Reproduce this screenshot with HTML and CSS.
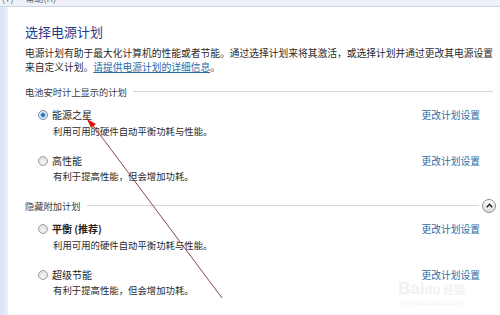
FILE: index.html
```html
<!DOCTYPE html>
<html lang="zh">
<head>
<meta charset="utf-8">
<link rel="stylesheet" href="styles.css">
</head>
<body>
<div class="menubar"><span class="menu-item">(T)</span><span class="menu-item">帮助(H)</span></div>
<div class="main">
  <div class="sidebar"></div>
  <div class="content">
    <h1 class="title">选择电源计划</h1>
    <p class="intro">电源计划有助于最大化计算机的性能或者节能。通过选择计划来将其激活，或选择计划并通过更改其电源设置<br>来自定义计划。<a class="link underline" href="#">请提供电源计划的详细信息</a>。</p>

    <div class="section">
      <span class="section-title">电池安时计上显示的计划</span>
      <span class="section-line"></span>
    </div>
    <div class="plans">
      <div class="plan">
        <div class="plan-head">
          <span class="radio checked"></span>
          <span class="plan-name">能源之星</span>
          <a class="link plan-link" href="#">更改计划设置</a>
        </div>
        <div class="plan-desc">利用可用的硬件自动平衡功耗与性能。</div>
      </div>
      <div class="plan">
        <div class="plan-head">
          <span class="radio"></span>
          <span class="plan-name">高性能</span>
          <a class="link plan-link" href="#">更改计划设置</a>
        </div>
        <div class="plan-desc">有利于提高性能，但会增加功耗。</div>
      </div>
    </div>

    <div class="section section-hidden">
      <span class="section-title">隐藏附加计划</span>
      <span class="section-line"></span>
      <span class="collapse-btn"><svg width="7" height="5" viewBox="0 0 7 5"><path d="M0.8 4.2 L3.5 1.3 L6.2 4.2" fill="none" stroke="#222" stroke-width="1.5"/></svg></span>
    </div>
    <div class="plans">
      <div class="plan">
        <div class="plan-head">
          <span class="radio"></span>
          <span class="plan-name bold">平衡 (推荐)</span>
          <a class="link plan-link" href="#">更改计划设置</a>
        </div>
        <div class="plan-desc">利用可用的硬件自动平衡功耗与性能。</div>
      </div>
      <div class="plan">
        <div class="plan-head">
          <span class="radio"></span>
          <span class="plan-name">超级节能</span>
          <a class="link plan-link" href="#">更改计划设置</a>
        </div>
        <div class="plan-desc">有利于提高性能，但会增加功耗。</div>
      </div>
    </div>
  </div>
</div>

<div class="watermark">
  <div class="wm-logo">Bai<span class="wm-du">du</span><span class="wm-jy">经验</span></div>
  <div class="wm-url">jingyan.baidu.com</div>
</div>

<svg class="arrow" width="500" height="315" viewBox="0 0 500 315">
  <line x1="222" y1="298" x2="92" y2="124" stroke="#8a4848" stroke-width="1"/>
  <polygon points="87,119 96,124 91,128" fill="#e01010"/>
</svg>
</body>
</html>
```
FILE: styles.css
```css
html, body {
  margin: 0;
  padding: 0;
}
body {
  width: 500px;
  height: 315px;
  overflow: hidden;
  background: #ffffff;
  font-family: "Noto Sans CJK SC", "Noto Sans", sans-serif;
  color: #2a2a2a;
  position: relative;
}
.menubar {
  height: 6px;
  background: #eef2f8;
  border-bottom: 1px solid #c8d4e6;
  overflow: hidden;
  font-size: 9px;
  line-height: 6px;
  color: #666;
  display: flex;
  gap: 12px;
  padding-left: 2px;
}
.menu-item {
  position: relative;
  top: -4px;
}
.main {
  display: flex;
  height: 308px;
}
.sidebar {
  width: 7px;
  background: linear-gradient(to right, #d9e4f3, #e6eef9);
  border-right: 1px solid #eef3fa;
}
.content {
  flex: 1;
  padding: 0 7px 0 17px;
}
.title {
  margin: 16px 0 0;
  font-size: 13px;
  line-height: 17px;
  font-weight: normal;
  color: #1f3a8a;
}
.intro {
  margin: 6px 0 0;
  font-size: 9.75px;
  line-height: 14px;
  color: #2a2a2a;
  white-space: nowrap;
}
.link {
  color: #2e6aa6;
  text-decoration: none;
}
.underline {
  text-decoration: underline;
}
.section {
  display: flex;
  align-items: center;
  margin-top: 12px;
  height: 12px;
}
.section-hidden {
  margin-top: 17px;
  margin-right: -3px;
}
.section-title {
  font-size: 9.25px;
  line-height: 12px;
  color: #3a3a3a;
  white-space: nowrap;
}
.section-line {
  flex: 1;
  height: 1px;
  background: #d4d8de;
  margin-left: 6px;
  margin-top: -1px;
}
.collapse-btn {
  width: 12px;
  height: 12px;
  border-radius: 50%;
  border: 1px solid #8c8c8c;
  background: linear-gradient(#ffffff, #dcdcdc);
  display: flex;
  align-items: center;
  justify-content: center;
  margin-left: 3px;
  margin-top: -1px;
}
.plans {
  margin-top: 10px;
  padding-right: 13px;
  display: flex;
  flex-direction: column;
  gap: 16px;
}
.plan-head {
  display: flex;
  align-items: center;
  height: 14px;
}
.radio {
  box-sizing: border-box;
  width: 10px;
  height: 10px;
  border-radius: 50%;
  border: 1px solid #a2a2a2;
  background: radial-gradient(circle at 50% 60%, #f8f8f8 0, #e2e2e2 60%, #cfcfcf 100%);
  margin-left: 13px;
  margin-right: 4px;
  flex: none;
}
.radio.checked {
  border-color: #6f8aa6;
  background: radial-gradient(circle, #1b4f8c 0, #3f86c8 28%, #9cc6ea 42%, #e9f1f8 62%, #d0d8e0 100%);
}
.plan-name {
  font-size: 10px;
  line-height: 14px;
  color: #222;
  white-space: nowrap;
}
.bold {
  font-weight: bold;
}
.plan-link {
  margin-left: auto;
  font-size: 9.75px;
  line-height: 14px;
  white-space: nowrap;
}
.plan-desc {
  margin-top: 1.5px;
  padding-left: 28px;
  font-size: 9.4px;
  line-height: 14px;
  color: #2a2a2a;
  white-space: nowrap;
}
.watermark {
  position: absolute;
  left: 398px;
  top: 280px;
  color: rgba(200, 206, 214, 0.3);
  font-family: "Liberation Sans", sans-serif;
  pointer-events: none;
}
.wm-logo {
  font-size: 17px;
  font-weight: bold;
  line-height: 17px;
  white-space: nowrap;
}
.wm-du {
  font-size: 13px;
}
.wm-jy {
  font-family: "Noto Sans CJK SC", sans-serif;
  font-size: 11px;
  margin-left: 3px;
}
.wm-url {
  font-size: 8px;
  line-height: 10px;
  margin-left: 2px;
}
.arrow {
  position: absolute;
  left: 0;
  top: 0;
  pointer-events: none;
}
```
